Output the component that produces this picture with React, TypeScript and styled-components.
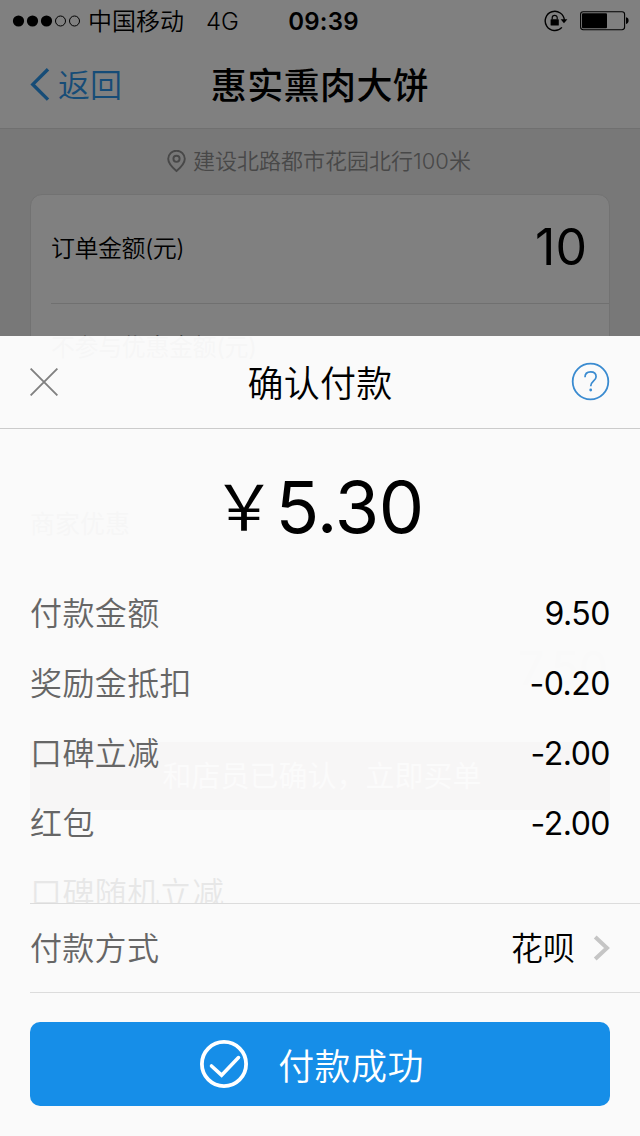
import React from "react";
import styled, { createGlobalStyle } from "styled-components";

const GlobalStyle = createGlobalStyle`
  * { box-sizing: border-box; }
  body { margin: 0; background: #fff; font-family: Inter, "Noto Sans CJK SC", sans-serif; color: #000; }
`;

const Screen = styled.div`
  position: relative;
  width: 640px;
  height: 1136px;
  overflow: hidden;
`;

const Page = styled.div`
  height: 1136px;
  display: flex;
  flex-direction: column;
  background: #787878;
`;

const Header = styled.header`
  height: 129px;
  flex: none;
  background: #808080;
  border-bottom: 1px solid #707070;
`;

const StatusBar = styled.div`
  height: 42px;
  padding: 0 11px 0 12px;
  display: grid;
  grid-template-columns: 1fr auto 1fr;
  align-items: center;
`;

const StatusGroup = styled.div<{ $end?: boolean }>`
  display: flex;
  align-items: center;
  justify-content: ${(p) => (p.$end ? "flex-end" : "flex-start")};
`;

const Text = styled.span<{
  $size: number;
  $weight?: number;
  $color?: string;
  $spacing?: number;
  $left?: number;
  $top?: number;
}>`
  font-size: ${(p) => p.$size}px;
  font-weight: ${(p) => p.$weight ?? 400};
  color: ${(p) => p.$color ?? "#000"};
  letter-spacing: ${(p) => p.$spacing ?? 0}px;
  margin-left: ${(p) => p.$left ?? 0}px;
  padding-top: ${(p) => p.$top ?? 0}px;
  line-height: 1.4;
  white-space: nowrap;
`;

const NavBar = styled.div`
  height: 86px;
  padding: 0 30px;
  display: grid;
  grid-template-columns: 1fr auto 1fr;
  align-items: center;
`;

const BackButton = styled.div`
  display: flex;
  align-items: center;
  gap: 8px;
`;

const Address = styled.div`
  height: 65px;
  flex: none;
  padding-right: 2px;
  display: flex;
  align-items: center;
  justify-content: center;
  gap: 7px;
`;

const OrderCard = styled.div`
  margin: 0 30px;
  height: 200px;
  flex: none;
  background: #808080;
  border: 1px solid #727272;
  border-radius: 12px;
  padding-left: 20px;
`;

const OrderRow = styled.div<{ $divided?: boolean; $height: number }>`
  height: ${(p) => p.$height}px;
  padding-right: 22px;
  display: flex;
  align-items: center;
  justify-content: space-between;
  border-bottom: ${(p) => (p.$divided ? "1px solid #707070" : "none")};
`;

const OrderAmount = styled.span`
  font-size: 50px;
  line-height: 60px;
  padding-bottom: 4px;
`;

const Offers = styled.div`
  margin-top: 108px;
  height: 44px;
  padding-left: 30px;
  display: flex;
  align-items: center;
`;

const Total = styled.div`
  margin-top: 82px;
  height: 80px;
  padding-right: 32px;
  display: flex;
  align-items: center;
  justify-content: flex-end;
`;

const OrderButton = styled.div`
  margin: 34px 30px 0;
  height: 68px;
  display: flex;
  align-items: center;
  justify-content: center;
  background: #38000e;
`;

const Sheet = styled.section`
  position: absolute;
  left: 0;
  right: 0;
  bottom: 0;
  height: 800px;
  display: flex;
  flex-direction: column;
  background: rgba(254, 254, 254, 0.97);
`;

const SheetHeader = styled.div`
  height: 93px;
  flex: none;
  padding: 0 30px;
  display: grid;
  grid-template-columns: 1fr auto 1fr;
  align-items: center;
  border-bottom: 1px solid #cbcbcb;
`;

const HelpSlot = styled.div`
  display: flex;
  justify-content: flex-end;
  padding-bottom: 2px;
`;

const Amount = styled.div`
  height: 149px;
  flex: none;
  padding: 8px 4px 0 0;
  display: flex;
  align-items: center;
  justify-content: center;
`;

const Details = styled.div`
  height: 325px;
  flex: none;
  overflow: hidden;
  padding-left: 30px;
`;

const DetailRow = styled.div<{ $faded?: boolean }>`
  height: 70px;
  padding-right: 30px;
  display: flex;
  align-items: center;
  justify-content: space-between;
  opacity: ${(p) => (p.$faded ? 0.12 : 1)};
`;

const MethodRow = styled.div`
  margin-left: 30px;
  padding-right: 30px;
  height: 90px;
  flex: none;
  display: flex;
  align-items: center;
  border-top: 1px solid #dcdcdc;
  border-bottom: 1px solid #dcdcdc;
`;

const MethodValue = styled.div`
  margin-left: auto;
  display: flex;
  align-items: center;
  gap: 18px;
`;

const PayButton = styled.button`
  margin: 29px 30px 0;
  height: 84px;
  flex: none;
  border: 0;
  border-radius: 10px;
  background: #168ee8;
  display: flex;
  align-items: center;
  justify-content: center;
  gap: 30px;
  padding: 0 16px 0 0;
  font-family: inherit;
`;

const SignalDots = () => (
  <svg width="70" height="14" viewBox="0 0 70 14">
    {[0, 1, 2, 3, 4].map((i) => (
      <circle key={i} cx={6.5 + i * 14} cy="7" r={i < 3 ? 5.6 : 5} fill={i < 3 ? "#000" : "none"} stroke="#000" strokeWidth={i < 3 ? 0 : 1} />
    ))}
  </svg>
);

const RotationLock = () => (
  <svg width="24" height="22" viewBox="0 0 24 22" fill="none" stroke="#000">
    <path d="M17.9 17.4A9.6 9.6 0 1 1 20.4 10.4" strokeWidth="1.4" />
    <path d="M16.6 9.3h6.8L20 13.2z" fill="#000" stroke="none" />
    <rect x="6.6" y="9.2" width="8.2" height="6.4" rx="0.6" fill="#000" stroke="none" />
    <path d="M8.2 9.6V7.8a2.5 2.5 0 0 1 5 0v1.8" strokeWidth="1.2" />
  </svg>
);

const BatteryIcon = styled.svg`
  margin-left: 11px;
`;

const Battery = () => (
  <BatteryIcon width="50" height="20" viewBox="0 0 50 20">
    <rect x="1.6" y="0.7" width="44" height="18" rx="2.6" fill="none" stroke="#000" strokeWidth="1.1" />
    <rect x="3" y="2.2" width="25" height="15" rx="1" />
    <path d="M47 6.2c1.8.4 2.6 1.4 2.6 3.4s-.8 3-2.6 3.4z" />
  </BatteryIcon>
);

const BackArrow = () => (
  <svg width="20" height="34" viewBox="0 0 20 34" fill="none" stroke="#164c77" strokeWidth="3.4">
    <path d="M18 1.2L2.8 16.4L18 31.6" />
  </svg>
);

const Pin = () => (
  <svg width="19" height="23" viewBox="0 0 19 23" fill="none" stroke="#484848" strokeWidth="1.9">
    <path d="M9.5 21C6.5 18.4 1.2 14.2 1.2 8.8a8.3 8.1 0 0 1 16.6 0c0 5.4-5.3 9.6-8.3 12.2z" />
    <circle cx="9.5" cy="8.8" r="3.1" />
  </svg>
);

const Close = () => (
  <svg width="28" height="28" viewBox="0 0 28 28" stroke="#808080" strokeWidth="1.9">
    <path d="M0.6 0.6L27.4 27.4M27.4 0.6L0.6 27.4" />
  </svg>
);

const Help = () => (
  <svg width="39" height="39" viewBox="0 0 39 39" fill="none" stroke="#3a8bd0">
    <circle cx="19.5" cy="19.5" r="17.8" strokeWidth="1.8" />
    <path d="M14 15.2C14 11.6 16.4 9.8 19.6 9.8s5.5 1.9 5.5 5c0 4-5.4 4.5-5.4 9.4" strokeWidth="1.7" />
    <circle cx="19.7" cy="28" r="1.4" fill="#3a8bd0" stroke="none" />
  </svg>
);

const Chevron = () => (
  <svg width="17" height="26" viewBox="0 0 17 26" fill="none" stroke="#c5c5c5" strokeWidth="4">
    <path d="M2.2 2L14 13L2.2 24" />
  </svg>
);

const CheckCircle = () => (
  <svg width="48" height="48" viewBox="0 0 48 48" fill="none" stroke="#fff" strokeWidth="3.8">
    <circle cx="24" cy="24" r="22.1" />
    <path d="M11.5 26L21.6 35.2L38.5 17.6" strokeLinecap="round" strokeWidth="3.6" />
  </svg>
);

const details = [
  { label: "付款金额", value: "9.50" },
  { label: "奖励金抵扣", value: "-0.20" },
  { label: "口碑立减", value: "-2.00" },
  { label: "红包", value: "-2.00" },
  { label: "口碑随机立减", value: "", faded: true },
];

export default function App() {
  return (
    <Screen>
      <GlobalStyle />
      <Page>
        <Header>
          <StatusBar>
            <StatusGroup>
              <SignalDots />
              <Text $size={24} $left={6} $weight={350} $top={1}>中国移动</Text>
              <Text $size={24} $left={22} $weight={350} $top={1}>4G</Text>
            </StatusGroup>
            <Text $size={24} $weight={600} $left={6} $spacing={0.2} $top={1}>09:39</Text>
            <StatusGroup $end>
              <RotationLock />
              <Battery />
            </StatusGroup>
          </StatusBar>
          <NavBar>
            <BackButton>
              <BackArrow />
              <Text $size={32} $weight={350} $color="#164c77" $top={2}>返回</Text>
            </BackButton>
            <Text $size={36} $weight={500} $spacing={0.4} $top={3}>惠实熏肉大饼</Text>
          </NavBar>
        </Header>
        <Address>
          <Pin />
          <Text $size={22} $weight={350} $color="#484848">建设北路都市花园北行100米</Text>
        </Address>
        <OrderCard>
          <OrderRow $height={109} $divided>
            <Text $size={24} $weight={350} $spacing={-0.5}>订单金额(元)</Text>
            <OrderAmount>10</OrderAmount>
          </OrderRow>
          <OrderRow $height={88}>
            <Text $size={24} $spacing={-0.4}>不参与优惠金额(元)</Text>
          </OrderRow>
        </OrderCard>
        <Offers>
          <Text $size={25}>商家优惠</Text>
        </Offers>
        <Total>
          <Text $size={46} $color="#585858">7.50</Text>
        </Total>
        <OrderButton>
          <Text $size={29} $color="#909090" $left={4} $top={2}>和店员已确认，立即买单</Text>
        </OrderButton>
      </Page>
      <Sheet>
        <SheetHeader>
          <Close />
          <Text $size={36} $weight={350} $spacing={0.3} $top={5}>确认付款</Text>
          <HelpSlot>
            <Help />
          </HelpSlot>
        </SheetHeader>
        <Amount>
          <Text $size={63}>{"\uffe5"}</Text>
          <Text $size={72} $spacing={-0.6}>5.30</Text>
        </Amount>
        <Details>
          {details.map((d) => (
            <DetailRow key={d.label} $faded={d.faded}>
              <Text $size={32} $weight={350} $color="#666" $spacing={0.4} $top={3}>{d.label}</Text>
              <Text $size={32} $spacing={-0.5} $top={2}>{d.value}</Text>
            </DetailRow>
          ))}
        </Details>
        <MethodRow>
          <Text $size={32} $weight={350} $color="#666" $spacing={0.3} $top={3}>付款方式</Text>
          <MethodValue>
            <Text $size={32} $weight={350} $top={3}>花呗</Text>
            <Chevron />
          </MethodValue>
        </MethodRow>
        <PayButton>
          <CheckCircle />
          <Text $size={36} $weight={350} $color="#fff" $spacing={0.4} $top={6}>付款成功</Text>
        </PayButton>
      </Sheet>
    </Screen>
  );
}
